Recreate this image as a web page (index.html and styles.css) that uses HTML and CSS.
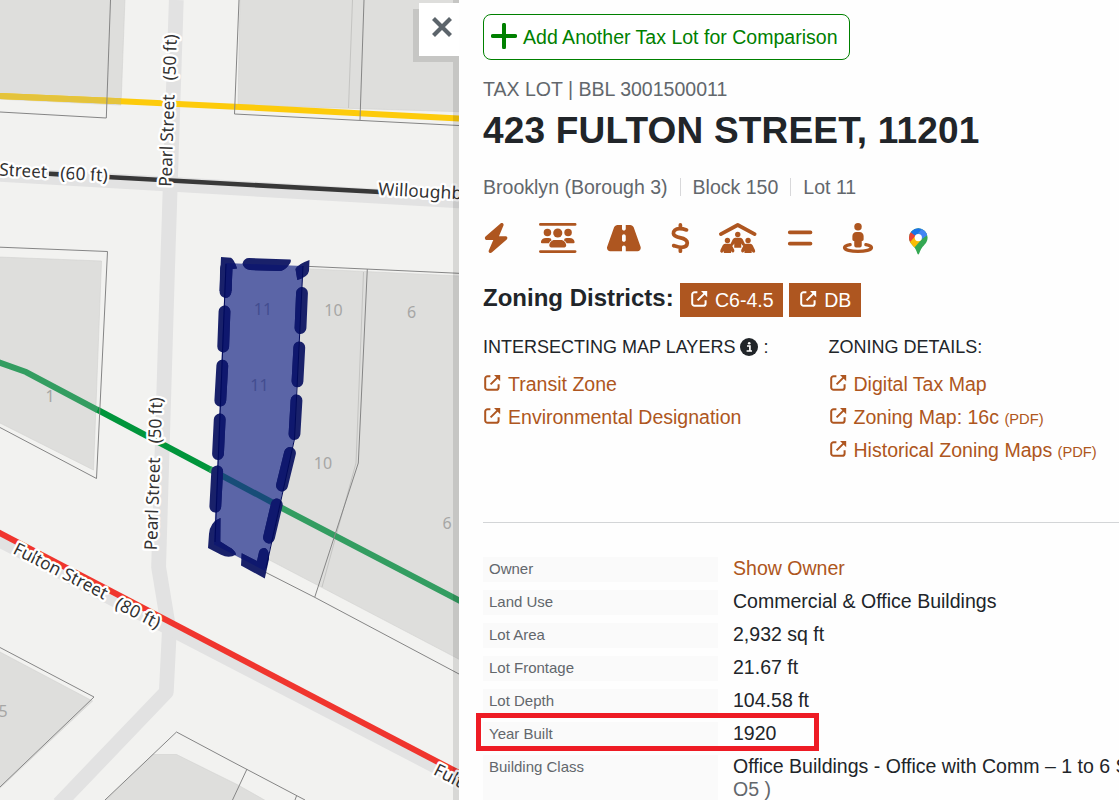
FILE: index.html
```html
<!DOCTYPE html>
<html lang="en">
<head>
<meta charset="utf-8">
<title>423 Fulton Street</title>
<link rel="stylesheet" href="styles.css">
</head>
<body>
<svg class="defs" width="0" height="0" aria-hidden="true">
  <symbol id="ext" viewBox="0 0 18 18">
    <path d="M7.400 2.200H4.600A2.400 2.400 0 0 0 2.200 4.600V13.400A2.400 2.400 0 0 0 4.600 15.800H13.200A2.400 2.400 0 0 0 15.600 13.400V10.200M7.600 10.400 14.900 3.100" fill="none" stroke="currentColor" stroke-width="2"/>
    <path d="M11 1H17.200V7.200Z" fill="currentColor"/>
  </symbol>
</svg>
<div class="app">
  <div class="map">
    <svg class="map-canvas" width="459" height="800" viewBox="0 0 459 800">
      <g class="road">
        <path d="M176.300 0 167.500 270 158.600 567 169.300 632 166.300 692 59 804"/>
        <path d="M-5 174 470 201.500"/>
        <path d="M-5 537.500 470 784"/>
      </g>
      <g class="building">
        <path d="M-2-2H125L121 105-2 99Z"/>
        <path d="M240-2 238 105 470 112V-2Z"/>
        <path d="M-2 257 101.500 261 93.500 470-2 422Z"/>
        <path d="M228 265 470 276.500V665L258 554 214 540Z"/>
        <path d="M-2 651 92.500 701-2 790Z"/>
        <path d="M104 802 153 754.500H176.500L238 785 268 802Z"/>
      </g>
      <path class="hairline" d="M352.500 0 348.500 108M363.500 272 356 463 322 587"/>
      <g class="transit">
        <path class="yellow" d="M0 96 121 101.300 240 107 459 118.500"/>
        <path class="yellow-dim" d="M0 96 121 101.300"/>
        <path class="green" d="M97 409.500 230 480"/>
        <path class="green-dim" d="M-2 362 26 372 97.500 410M210 469 280 507 470 606"/>
        <path class="red" d="M-5 530.500 459 773"/>
        <path class="black" d="M49 173.800 60 174.400M107 177 380 192"/>
      </g>
      <path class="parcel" d="M110.500 0 106.300 118 0 112M239 0 234.500 114 459 125.500M364 0 360 120M0 247.200 107.500 251.500 96.500 478.500 0 427.500M300 266 459 273.300M367.300 269 358.300 463 314.700 597.300M264 571.500 314.700 597.300 459 674M0 647.500 94 697 0 787M105 800 176.500 732 230 760.500 305 800M247 769 232.500 800M296.500 796 295 800"/>
      <g class="lot-no">
        <text x="333.500" y="316">10</text><text x="411.500" y="318">6</text>
        <text x="323" y="469">10</text><text x="447" y="529">6</text>
        <text x="50" y="402">1</text><text x="3" y="717">5</text>
      </g>
      <clipPath id="lot"><path d="M225.500 263 303 266 294 440 265 571 214 544.500Z"/></clipPath>
      <path class="selected" d="M225.500 263 303 266 294 440 265 571 214 544.500Z"/>
      <path class="selected-transit" d="M217 473 278 505.500"/>
      <g class="lot-no inside"><text x="263" y="315">11</text><text x="259.500" y="391">11</text></g>
      <g class="dashes" id="dashes">
        <path d="M225.500 292 226 268M224.500 311.500 223.200 346.500M222.300 365.700 220.300 400.500M219.700 419.500 218 454M217.200 471.500 215.300 506.500M302 293 300.500 328M299.300 347.500 297.500 381.300M296.500 400.500 294.500 434M290 453 282 485.500M276.800 504.500 269 537.500"/>
        <path class="corner" d="M221 257 231 257.700Q234 259 237 268.500L232.500 269 231.500 291 219.500 291ZM242.500 263.500Q244 258 249 258L290.500 259.500Q292 262 288 266 284 271 279 271L250 270Q244 269 242.500 263.500ZM309.500 260 309 271Q308 277 297.300 280L295.500 269Q298 264 309.500 260ZM220.500 518Q210 522 209 534L208 548 221 554.700Q229 559 236 554.500 235 550 229 547L220.300 541.500ZM241.700 553.300 257 561 259 552Q260 548 265 548 269.500 550 269 559L264.800 578.500 241 565.500Z"/>
      </g>
      <use class="overlap" href="#dashes" clip-path="url(#lot)"/>
      <path class="inner" d="M226 264 215 542M303 266 294.500 439 266 568"/>
      <g class="street">
        <text transform="translate(171.300 187) rotate(-88)" textLength="92.500">Pearl Street</text>
        <text transform="translate(175.300 80.500) rotate(-88)" textLength="46">(50 ft)</text>
        <text transform="translate(156.800 550.500) rotate(-88)" textLength="93">Pearl Street</text>
        <text transform="translate(160.700 443.500) rotate(-88)" textLength="46">(50 ft)</text>
        <text transform="translate(-1 175.500) rotate(3)" textLength="48">Street</text>
        <text transform="translate(60 179) rotate(3)" textLength="47.500">(60 ft)</text>
        <text transform="translate(378 195) rotate(3)" textLength="84">Willoughb</text>
        <text transform="translate(12 553) rotate(27)" textLength="103">Fulton Street</text>
        <text transform="translate(114 607.500) rotate(27)" textLength="48">(80 ft)</text>
        <text transform="translate(432.500 774) rotate(27)" textLength="104">Fulton Street</text>
      </g>
    </svg>
    <button class="close" aria-label="Close"><svg width="22" height="22" viewBox="0 0 22 22"><path d="M2.500 2.500 19.500 19.500M19.500 2.500 2.500 19.500"/></svg></button>
  </div>

  <main class="panel">
    <button class="add"><svg width="26" height="26" viewBox="0 0 26 26"><path d="M13 1.800V24.200M1.800 13H24.200"/></svg><span>Add Another Tax Lot for Comparison</span></button>
    <div class="bbl">TAX LOT | BBL 3001500011</div>
    <h1>423 FULTON STREET, 11201</h1>
    <div class="place"><span>Brooklyn (Borough 3)</span><span>Block 150</span><span>Lot 11</span></div>

    <nav class="icons">
      <svg width="26.250" height="30" viewBox="0 0 448 512"><path d="M349.400 44.600c5.900-13.700 1.500-29.700-10.600-38.500s-28.600-8-39.900 1.800l-256 224c-10 8.800-13.600 22.900-8.900 35.300S50.700 288 64 288H175.500L98.600 467.400c-5.900 13.700-1.500 29.700 10.600 38.500s28.600 8 39.900-1.800l256-224c10-8.800 13.600-22.900 8.900-35.300s-16.600-20.700-30-20.700H272.500L349.400 44.600z"/></svg>
      <svg width="37.500" height="30" viewBox="0 0 640 512"><path d="M24 0H616a24 24 0 0 1 0 48H24a24 24 0 0 1 0-48zM24 464H616a24 24 0 0 1 0 48H24a24 24 0 0 1 0-48z"/><circle cx="320" cy="171" r="78"/><circle cx="144" cy="160" r="64"/><circle cx="496" cy="160" r="64"/><path d="M267 288H373C424 288 464 330 464 384 464 402 450 416 433 416H207C190 416 176 402 176 384 176 330 216 288 267 288zM118 256H168Q186 256 202 264C205 280 210 288 216 294 194 306 178 324 168 346H52Q32 346 32 326C40 280 70 256 118 256zM522 256H472Q454 256 438 264C435 280 430 288 424 294 446 306 462 324 472 346H588Q608 346 608 326C600 280 570 256 522 256z"/></svg>
      <svg width="33.750" height="30" viewBox="0 0 576 512"><path d="M256 32H181.200c-27.100 0-51.300 17.100-60.300 42.600L3.100 407.200C1.100 413 0 419.200 0 425.400C0 455.500 24.500 480 54.600 480H256V416c0-17.700 14.300-32 32-32s32 14.300 32 32v64H521.400c30.200 0 54.600-24.500 54.600-54.600c0-6.200-1.100-12.400-3.100-18.200L455.100 74.600C446 49.100 421.900 32 394.800 32H320V96c0 17.700-14.300 32-32 32s-32-14.300-32-32V32zm64 192v64c0 17.700-14.300 32-32 32s-32-14.300-32-32V224c0-17.700 14.300-32 32-32s32 14.300 32 32z"/></svg>
      <svg width="18.750" height="30" viewBox="0 0 320 512"><path class="line" stroke-width="64" d="M160 32V92M160 420V480M265 118C215 100 180 94 145 95 75 97 38 138 42 180 46 222 90 238 150 250 220 264 278 280 278 340 276 390 235 416 175 417 130 417 90 400 46 386"/></svg>
      <svg width="37.500" height="30" viewBox="0 0 640 512"><path class="line" stroke-width="64" d="M32 190 320 34 608 190"/><circle cx="320" cy="196" r="46"/><circle cx="144" cy="298" r="46"/><circle cx="496" cy="298" r="46"/><path d="M276 252H364Q390 254 404 278L446 362Q450 390 418 392 402 390 390 366L380 350V424H260V350L250 366Q238 390 222 392 190 390 194 362L236 278Q250 252 276 252zM104 354H184Q208 356 220 380L260 458Q272 490 246 504 222 510 206 478V512H82V478Q70 514 38 508 8 494 26 458L64 380Q78 356 104 354zM456 354H536Q562 356 574 380L612 458Q630 490 602 508 570 514 558 478V512H434V478Q416 510 394 504 368 490 380 458L420 380Q432 356 456 354z"/></svg>
      <svg width="26.250" height="30" viewBox="0 0 448 512"><path class="line" stroke-width="62" d="M46 160H402M46 352H402"/></svg>
      <svg width="30" height="30" viewBox="0 0 512 512"><circle cx="256" cy="64" r="64"/><path d="M232 152H280Q350 156 352 222V280Q350 306 320 308V384Q318 416 288 416H224Q194 416 192 384V308Q162 306 160 280V222Q162 156 232 152z"/><path class="line" stroke-width="56" d="M122 370C52 382 26 402 26 422 26 458 132 486 256 486S486 458 486 422C486 402 460 382 390 370"/></svg>
      <svg width="30" height="30" viewBox="0 0 30 30"><clipPath id="pin"><path d="M15.300 31.500C14.200 31.500 14.100 28.300 11.800 25 9.500 22 6 19.500 6 14.600A9.300 9.300 0 0 1 24.600 14.600C24.600 19.500 21.200 22 18.800 25 16.500 28.300 16.400 31.500 15.300 31.500Z"/></clipPath><g clip-path="url(#pin)"><path fill="#34a853" d="M0 0H30V32H0z"/><path fill="#fbbc04" d="M5 20 13 11 19 16 10.500 25.500 5 25z"/><path fill="#ea4335" d="M4 19 4 7 8 8.500 13 12.500 7 19z"/><path fill="#1a73e8" d="M7.500 9 15 2 20 5 12.500 13z"/><path fill="#4285f4" d="M12 14 19.500 5 27 6V10.500L17.500 17z"/><circle cx="15.300" cy="14.600" r="3.600" fill="#fff"/></g></svg>
    </nav>

    <div class="zoning"><strong>Zoning Districts:</strong><a class="tag"><svg><use href="#ext"/></svg>C6-4.5</a><a class="tag"><svg><use href="#ext"/></svg>DB</a></div>

    <div class="layers">
      <section>
        <h2>INTERSECTING MAP LAYERS <svg width="18" height="18" viewBox="0 0 18 18"><circle cx="9" cy="9" r="9" fill="currentColor"/><path d="M7 8H9.900V13M6.600 13H12" fill="none" stroke="#fff" stroke-width="1.700"/><circle cx="9.200" cy="5.200" r="1.300" fill="#fff"/></svg> :</h2>
        <a><svg><use href="#ext"/></svg><span>Transit Zone</span></a>
        <a><svg><use href="#ext"/></svg><span>Environmental Designation</span></a>
      </section>
      <section>
        <h2>ZONING DETAILS:</h2>
        <a><svg><use href="#ext"/></svg><span>Digital Tax Map</span></a>
        <a><svg><use href="#ext"/></svg><span>Zoning Map: 16c <small>(PDF)</small></span></a>
        <a><svg><use href="#ext"/></svg><span>Historical Zoning Maps <small>(PDF)</small></span></a>
      </section>
    </div>

    <dl class="facts">
      <div><dt>Owner</dt><dd class="link">Show Owner</dd></div>
      <div><dt>Land Use</dt><dd>Commercial &amp; Office Buildings</dd></div>
      <div><dt>Lot Area</dt><dd>2,932 sq ft</dd></div>
      <div><dt>Lot Frontage</dt><dd>21.67 ft</dd></div>
      <div><dt>Lot Depth</dt><dd>104.58 ft</dd></div>
      <div class="marked"><dt>Year Built</dt><dd>1920</dd></div>
      <div class="tall"><dt>Building Class</dt><dd>Office Buildings - Office with Comm – 1 to 6 Stories (<br><span class="muted">O5 )</span></dd></div>
    </dl>
  </main>
</div>
</body>
</html>
```
FILE: styles.css
```css
*, *::before, *::after { box-sizing: border-box; }
body { margin: 0; font-family: "Liberation Sans", Arial, sans-serif; font-size: 19.550px; color: #212529; background: #fefefe; }
button { font: inherit; padding: 0; }
.defs { position: absolute; }
.app { display: flex; width: 1119px; height: 800px; overflow: hidden; }

.map { position: relative; flex: 0 0 459px; height: 800px; background: #f2f2f0; overflow: hidden; }
.map::after { content: ""; position: absolute; top: 0; right: 0; width: 6px; height: 100%; background: rgba(0, 0, 0, .105); }
.map-canvas { display: block; }
.road path { fill: none; stroke: #e2e2e2; stroke-width: 14.800; stroke-linejoin: round; }
.building path { fill: #dededc; stroke: #d2d2d0; stroke-width: .6; }
.hairline { fill: none; stroke: #c4c4c2; stroke-width: 1; }
.transit path { fill: none; stroke-width: 6; }
.transit .yellow { stroke: #fdcb0b; }
.transit .yellow-dim { stroke: #e4c33c; }
.transit .green { stroke: #00953b; }
.transit .green-dim { stroke: #339d61; }
.transit .red { stroke: #f0352e; }
.transit .black { stroke: #383838; stroke-width: 4.600; }
.parcel { fill: none; stroke: #858585; stroke-width: 1; }
.lot-no { font: 16px "Noto Sans", sans-serif; fill: #a6a6a5; text-anchor: middle; }
.lot-no.inside { fill: #434d90; }
.selected { fill: #5b65a7; }
.selected-transit { stroke: #174d78; stroke-width: 6; }
.dashes { color: #19216a; }
.dashes path { fill: none; stroke: #19216a; stroke-width: 11.800; stroke-linecap: round; }
.dashes .corner { fill: #19216a; stroke: none; }
.overlap { filter: brightness(.78) saturate(1.5); }
.inner { fill: none; stroke: #00095a; stroke-width: 1; }
.street { font: 17.500px "Noto Sans", sans-serif; fill: #333; stroke: #fff; stroke-width: 4.600; stroke-linejoin: round; paint-order: stroke; }
.close { position: absolute; z-index: 2; top: 3px; right: 0; display: grid; align-items: start; width: 40px; height: 53px; padding: 2px 0 0 5px; border: 0; background: #fff; box-shadow: -6px 6px 0 rgba(0, 0, 0, .105); }
.close svg { margin: 11px 0 0 7px; }
.close path { stroke: #5c646b; stroke-width: 4.200; fill: none; }

.panel { flex: 1; min-width: 0; padding: 14px 0 0 24px; background: #fefefe; overflow: hidden; }
.add { display: flex; align-items: center; gap: 6px; width: 367px; height: 46px; padding: 0 0 2px 7px; border: 1px solid #008000; border-radius: 8px; background: #fff; color: #008000; white-space: nowrap; }
.add span { padding-top: 2px; }
.add path { stroke: currentColor; stroke-width: 4; stroke-linecap: round; }
.bbl { margin-top: 17px; line-height: 24px; color: #62676c; }
h1 { margin: 8px 0 0; font-size: 37px; line-height: 44px; letter-spacing: .18px; white-space: nowrap; }
.place { display: flex; margin-top: 22px; line-height: 24px; color: #62676c; }
.place span + span { margin-left: 12px; padding-left: 13px; background: linear-gradient(#d8d8da, #d8d8da) no-repeat 0 3px / 1px 18px; }
.icons { display: flex; gap: 30px; margin-top: 24px; height: 30px; color: #ae5620; }
.icons svg { fill: currentColor; flex: none; overflow: visible; }
.icons .line { fill: none; stroke: currentColor; stroke-linecap: round; stroke-linejoin: round; }
.zoning { display: flex; margin-top: 30px; height: 34px; white-space: nowrap; }
.zoning strong { flex: none; width: 197px; font-size: 24px; line-height: 30px; }
.tag { display: flex; flex: none; align-items: center; height: 34px; margin-right: 6px; padding: 0 9.500px 0 10px; background: #ae5620; color: #fff; }
.tag svg { width: 18px; height: 18px; margin: -3px 7px 0 0; }
.layers { display: flex; height: 206px; padding-top: 18px; border-bottom: 1px solid #d3d5d7; white-space: nowrap; }
.layers section { flex: 0 0 345.500px; }
h2 { display: flex; align-items: center; gap: 5px; margin: 0 0 8px; font-size: 18px; line-height: 24px; font-weight: 400; }
.layers a { display: flex; height: 33px; line-height: 35px; color: #ae5620; }
.layers a svg { width: 18px; height: 18px; margin: 7px 7px 0 0; }
.layers small { font-size: 14.700px; }
.facts { margin: 34px 0 0; }
.facts > div { position: relative; display: flex; height: 33px; white-space: nowrap; }
.facts dt { flex: none; width: 235px; height: 25px; padding-left: 6px; font-size: 15px; line-height: 24px; color: #62676c; background: #fafafa; }
.facts dd { margin: 0 0 0 15px; line-height: 23px; }
.facts .link { color: #ae5620; }
.muted { color: #62676c; }
.facts .tall dt { height: 50px; }
.marked::after { content: ""; position: absolute; left: -7px; top: -9px; width: 343px; height: 38px; border: 5px solid #ee1b24; }
```
